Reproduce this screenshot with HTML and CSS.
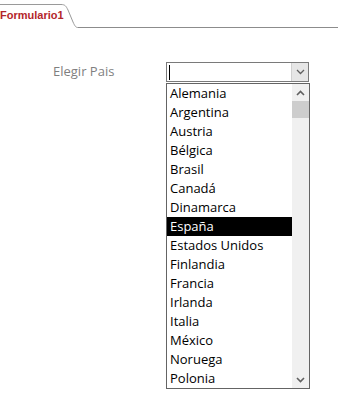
FILE: index.html
```html
<!DOCTYPE html>
<html lang="es">
<head>
    <meta charset="UTF-8">
    <meta name="viewport" content="width=device-width, initial-scale=1.0">
    <title>Formulario1</title>
    <link rel="stylesheet" href="styles.css">
</head>
<body>
    <div class="tabs">
        <div class="tab">Formulario1</div>
        <svg class="tab-curve" width="18" height="28" viewBox="0 0 18 28">
            <path d="M0 4.5 H1 C5 4.5 6 6 8 10 L13 22 C15 26.5 16 27.5 18 27.5" fill="none" stroke="#9a9a9a" stroke-width="1"/>
        </svg>
        <div class="tab-rest"></div>
    </div>

    <div class="form">
        <div class="row">
            <label class="label" for="pais">Elegir Pais</label>
            <div class="combo">
                <div class="combo-input"><span class="caret"></span></div>
                <div class="combo-btn">
                    <svg width="9" height="6" viewBox="0 0 9 6"><path d="M1 1 L4.5 4.5 L8 1" fill="none" stroke="#606060" stroke-width="1.3"/></svg>
                </div>
            </div>
        </div>

        <div class="dropdown">
            <ul class="options">
                <li>Alemania</li>
                <li>Argentina</li>
                <li>Austria</li>
                <li>Bélgica</li>
                <li>Brasil</li>
                <li>Canadá</li>
                <li>Dinamarca</li>
                <li class="selected">España</li>
                <li>Estados Unidos</li>
                <li>Finlandia</li>
                <li>Francia</li>
                <li>Irlanda</li>
                <li>Italia</li>
                <li>México</li>
                <li>Noruega</li>
                <li>Polonia</li>
            </ul>
            <div class="scrollbar">
                <div class="arrow">
                    <svg width="9" height="6" viewBox="0 0 9 6"><path d="M1 5 L4.5 1.5 L8 5" fill="none" stroke="#606060" stroke-width="1.6"/></svg>
                </div>
                <div class="track"><div class="thumb"></div></div>
                <div class="arrow">
                    <svg width="9" height="6" viewBox="0 0 9 6"><path d="M1 1 L4.5 4.5 L8 1" fill="none" stroke="#606060" stroke-width="1.6"/></svg>
                </div>
            </div>
        </div>
    </div>
</body>
</html>
```

FILE: styles.css
```css
body {
    margin: 0;
    background-color: #fff;
    font-family: "Open Sans", "Noto Sans", sans-serif;
}
.tabs {
    display: flex;
    height: 28px;
}
.tab {
    width: 60px;
    box-sizing: border-box;
    border-top: 1px solid #9a9a9a;
    margin-top: 4px;
    padding-top: 4px;
    font-family: "Liberation Sans", Arial, sans-serif;
    font-size: 11px;
    font-weight: bold;
    color: #b3262b;
    white-space: nowrap;
}
.tab-curve {
    display: block;
    flex: none;
}
.tab-rest {
    flex: 1;
    border-bottom: 1px solid #8c8c8c;
}
.form {
    padding-top: 34px;
}
.row {
    display: flex;
    align-items: flex-start;
}
.label {
    width: 113px;
    padding-left: 53px;
    font-size: 13px;
    color: #7f7f7f;
}
.combo {
    display: flex;
    width: 143px;
    height: 20px;
    box-sizing: border-box;
    border: 1px solid #7a7a7a;
}
.combo-input {
    flex: 1;
    padding: 2px 0 0 2px;
}
.caret {
    display: block;
    width: 1px;
    height: 15px;
    background-color: #000;
}
.combo-btn {
    width: 16px;
    background-color: #e6e6e6;
    border-left: 1px solid #d0d0d0;
    display: flex;
    align-items: center;
    justify-content: center;
}
.dropdown {
    display: flex;
    margin-left: 166px;
    margin-top: 1px;
    width: 144px;
    box-sizing: border-box;
    border: 1px solid #646464;
}
.options {
    flex: 1;
    list-style: none;
    margin: 0;
    padding: 0;
}
.options li {
    height: 19px;
    line-height: 19px;
    padding-left: 3px;
    font-size: 13px;
    color: #000;
    white-space: nowrap;
}
.options li.selected {
    background-color: #000;
    color: #fff;
}
.scrollbar {
    width: 17px;
    background-color: #f0f0f0;
    display: flex;
    flex-direction: column;
}
.arrow {
    height: 17px;
    display: flex;
    align-items: center;
    justify-content: center;
}
.track {
    flex: 1;
}
.thumb {
    height: 17px;
    background-color: #cdcdcd;
}
```
